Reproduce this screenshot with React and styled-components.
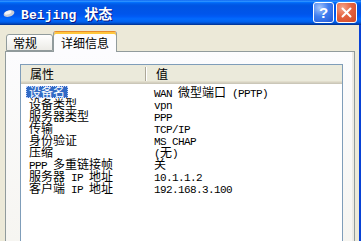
import React from 'react';
import styled, { createGlobalStyle } from 'styled-components';

const GlobalStyle = createGlobalStyle`
  html, body {
    margin: 0;
    padding: 0;
    background: #ECE9D8;
    overflow: hidden;
  }
`;

const Window = styled.div`
  width: 361px;
  height: 241px;
  display: flex;
  flex-direction: column;
  overflow: hidden;
  font-family: "Noto Sans CJK SC", sans-serif;
`;

const TitleBar = styled.div`
  height: 25px;
  flex: none;
  box-sizing: border-box;
  display: flex;
  align-items: center;
  padding: 0 4px 0 3px;
  background: linear-gradient(
    to bottom,
    #0058ee 0%, #3593ff 4%, #288eff 6%, #127dff 8%, #036ffc 10%,
    #0262ee 14%, #0057e5 20%, #0054e3 24%, #0055eb 56%, #005bf5 66%,
    #026afe 76%, #0062ef 86%, #0052d6 92%, #0040ab 96%, #003092 100%
  );
`;

const TitleText = styled.div`
  flex: 1;
  margin-left: 6px;
  color: #fff;
  font-weight: bold;
  white-space: pre;
  display: flex;
  align-items: baseline;
  text-shadow: 1px 1px #0a1883;
`;

const TitleLatin = styled.span`
  font-family: "Liberation Mono", monospace;
  font-size: 13px;
  letter-spacing: 0.1px;
`;

const TitleHan = styled.span`
  font-family: "Noto Sans CJK SC", sans-serif;
  font-size: 14px;
`;

const Controls = styled.div`
  display: flex;
  gap: 2px;
`;

const CtrlButton = styled.div`
  width: 21px;
  height: 21px;
  box-sizing: border-box;
  border: 1px solid #fff;
  border-radius: 3px;
  display: flex;
  align-items: center;
  justify-content: center;
  color: #fff;
  font-family: "Liberation Sans", sans-serif;
  font-weight: bold;
  font-size: 15px;
  background: ${p => p.$danger
    ? 'radial-gradient(circle at 30% 25%, #f6a58c 0%, #e5623f 45%, #d04a28 100%)'
    : 'radial-gradient(circle at 30% 25%, #a6c5fb 0%, #3f7ef0 45%, #2359d6 100%)'};
`;

const Body = styled.div`
  flex: 1;
  display: flex;
  flex-direction: column;
  padding: 6px 4px 0 5px;
  border-right: 2px solid #0842d6;
  min-height: 0;
`;

const TabRow = styled.div`
  height: 20px;
  flex: none;
  display: flex;
  align-items: flex-end;
  padding-left: 1px;
`;

const Tab = styled.div`
  box-sizing: border-box;
  width: ${p => p.$w}px;
  height: ${p => (p.$active ? 21 : 17)}px;
  margin-bottom: ${p => (p.$active ? -1 : 0)}px;
  position: relative;
  z-index: ${p => (p.$active ? 1 : 0)};
  border: 1px solid #919b9c;
  border-bottom: ${p => (p.$active ? 'none' : '1px solid #919b9c')};
  border-top-color: ${p => (p.$active ? '#e68b2c' : '#919b9c')};
  border-radius: 3px 3px 0 0;
  background: ${p => (p.$active ? '#fcfcfe' : 'linear-gradient(#ffffff, #ecebe6)')};
  box-shadow: ${p => (p.$active ? 'inset 0 2px #ffc73c' : 'none')};
  font-size: 12px;
  line-height: 12px;
  color: #000;
  display: flex;
  align-items: center;
  justify-content: ${p => (p.$active ? 'center' : 'flex-start')};
  padding: ${p => (p.$active ? '2px 0 0 0' : '0 0 0 6px')};
`;

const Panel = styled.div`
  flex: 1;
  display: flex;
  min-height: 0;
  border: 1px solid #919b9c;
  border-bottom: none;
  background: linear-gradient(#fcfcfe, #f6f5f1);
  box-shadow: inset -2px 0 #ecebe6;
  padding: 12px 11px 0 14px;
`;

const ListView = styled.div`
  flex: 1;
  display: flex;
  flex-direction: column;
  border: 1px solid #7f9db9;
  border-bottom: none;
  background: #fff;
`;

const Header = styled.div`
  height: 19px;
  flex: none;
  display: grid;
  grid-template-columns: 126px 1fr;
  background: #ebeadb;
  box-shadow: inset 0 -1px #cbc7b8, inset 0 -2px #d6d2c2, inset 0 -3px #e2decd;
`;

const HeaderCell = styled.div`
  font-size: 12px;
  line-height: 17px;
  padding-left: 9px;
  color: #000;
  background: ${p => (p.$divider
    ? 'linear-gradient(#aca899, #aca899) right 1px top 2px / 1px 14px no-repeat, linear-gradient(#fff, #fff) right 0 top 2px / 1px 14px no-repeat'
    : 'none')};
`;

const Rows = styled.div`
  padding-top: 2px;
`;

const Row = styled.div`
  display: grid;
  grid-template-columns: 126px 1fr;
  height: 12px;
  line-height: 12px;
  font-size: 12px;
  color: #000;
  white-space: pre;
`;

const NameCell = styled.div`
  padding-left: 5px;
`;

const Name = styled.span`
  display: inline-block;
  height: 12px;
  padding: 0 3px;
  background: ${p => (p.$selected ? '#316ac5' : 'transparent')};
  color: ${p => (p.$selected ? '#fff' : '#000')};
  outline: ${p => (p.$selected ? '1px dotted #c3d3fd' : 'none')};
  outline-offset: -1px;
`;

const ValueCell = styled.div`
  padding-left: 7px;
`;

const Latin = styled.span`
  font-family: "Liberation Mono", monospace;
  font-size: 11px;
  letter-spacing: -0.6px;
`;

const Han = styled.span`
  font-family: "Noto Sans CJK SC", sans-serif;
  font-size: 12px;
`;

const Mixed = ({ text }) =>
  text.match(/[\u0000-\u00ff]+|[^\u0000-\u00ff]+/g).map((part, i) =>
    /[\u0000-\u00ff]/.test(part[0])
      ? <Latin key={i}>{part}</Latin>
      : <Han key={i}>{part}</Han>
  );

const rows = [
  ['设备名', 'WAN 微型端口 (PPTP)'],
  ['设备类型', 'vpn'],
  ['服务器类型', 'PPP'],
  ['传输', 'TCP/IP'],
  ['身份验证', 'MS CHAP'],
  ['压缩', '(无)'],
  ['PPP 多重链接帧', '关'],
  ['服务器 IP 地址', '10.1.1.2'],
  ['客户端 IP 地址', '192.168.3.100'],
];

const NetIcon = () => (
  <svg width="12" height="10" viewBox="0 0 12 10">
    <ellipse cx="6" cy="5.5" rx="5.5" ry="3.2" fill="#c9ccd6" transform="rotate(-18 6 5.5)" />
    <ellipse cx="5" cy="4.6" rx="3.6" ry="1.8" fill="#f4f5f8" transform="rotate(-18 5 4.6)" />
  </svg>
);

const App = () => (
  <>
    <GlobalStyle />
    <Window>
      <TitleBar>
        <NetIcon />
        <TitleText>
          <TitleLatin>Beijing </TitleLatin>
          <TitleHan>状态</TitleHan>
        </TitleText>
        <Controls>
          <CtrlButton>?</CtrlButton>
          <CtrlButton $danger>
            <svg width="11" height="11" viewBox="0 0 11 11">
              <path d="M1.5 1.5 L9.5 9.5 M9.5 1.5 L1.5 9.5" stroke="#fff" strokeWidth="2" strokeLinecap="round" />
            </svg>
          </CtrlButton>
        </Controls>
      </TitleBar>
      <Body>
        <TabRow>
          <Tab $w={47}>常规</Tab>
          <Tab $w={64} $active>详细信息</Tab>
        </TabRow>
        <Panel>
          <ListView>
            <Header>
              <HeaderCell $divider>属性</HeaderCell>
              <HeaderCell>值</HeaderCell>
            </Header>
            <Rows>
              {rows.map(([name, value], i) => (
                <Row key={name}>
                  <NameCell>
                    <Name $selected={i === 0}><Mixed text={name} /></Name>
                  </NameCell>
                  <ValueCell><Mixed text={value} /></ValueCell>
                </Row>
              ))}
            </Rows>
          </ListView>
        </Panel>
      </Body>
    </Window>
  </>
);

export default App;
